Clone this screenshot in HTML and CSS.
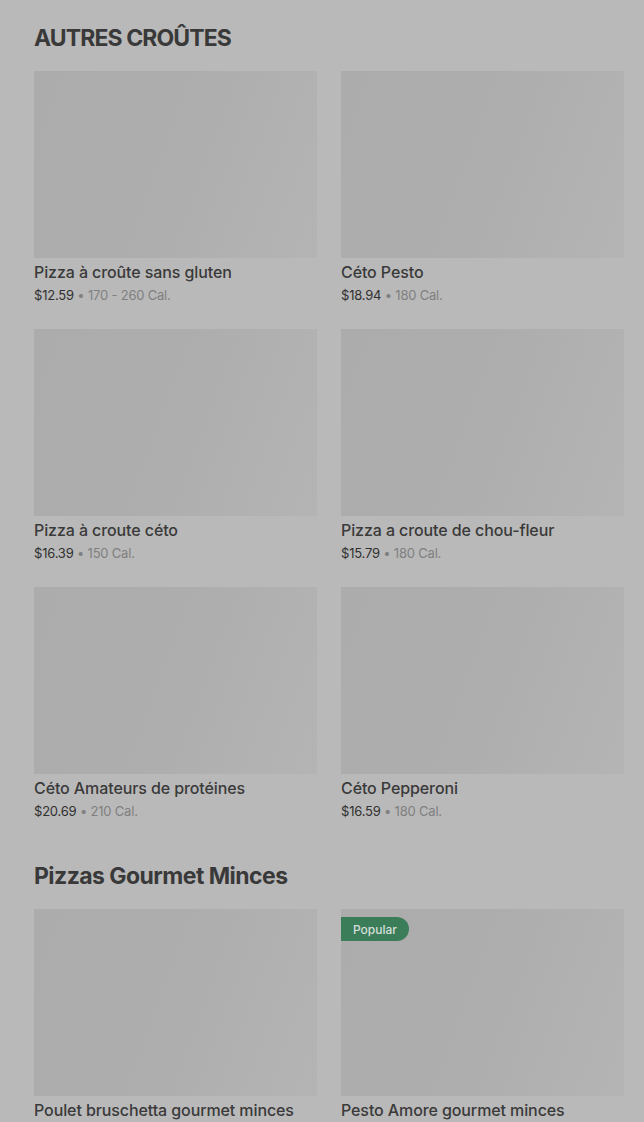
FILE: index.html
```html
<!DOCTYPE html>
<html lang="fr">
<head>
<meta charset="utf-8">
<link rel="stylesheet" href="styles.css">
</head>
<body>
<main class="page">
  <section class="section">
    <h2 class="heading heading-caps">AUTRES CROÛTES</h2>
    <div class="grid">
      <div class="card">
        <div class="thumb"></div>
        <div class="title">Pizza à croûte sans gluten</div>
        <div class="meta"><span class="price">$12.59</span> • 170 - 260 Cal.</div>
      </div>
      <div class="card">
        <div class="thumb"></div>
        <div class="title">Céto Pesto</div>
        <div class="meta"><span class="price">$18.94</span> • 180 Cal.</div>
      </div>
      <div class="card">
        <div class="thumb"></div>
        <div class="title">Pizza à croute céto</div>
        <div class="meta"><span class="price">$16.39</span> • 150 Cal.</div>
      </div>
      <div class="card">
        <div class="thumb"></div>
        <div class="title">Pizza a croute de chou-fleur</div>
        <div class="meta"><span class="price">$15.79</span> • 180 Cal.</div>
      </div>
      <div class="card">
        <div class="thumb"></div>
        <div class="title">Céto Amateurs de protéines</div>
        <div class="meta"><span class="price">$20.69</span> • 210 Cal.</div>
      </div>
      <div class="card">
        <div class="thumb"></div>
        <div class="title">Céto Pepperoni</div>
        <div class="meta"><span class="price">$16.59</span> • 180 Cal.</div>
      </div>
    </div>
  </section>
  <section class="section">
    <h2 class="heading heading-mixed">Pizzas Gourmet Minces</h2>
    <div class="grid">
      <div class="card">
        <div class="thumb"></div>
        <div class="title">Poulet bruschetta gourmet minces</div>
      </div>
      <div class="card">
        <div class="thumb"><span class="badge">Popular</span></div>
        <div class="title">Pesto Amore gourmet minces</div>
      </div>
    </div>
  </section>
</main>
</body>
</html>
```
FILE: styles.css
```css
html, body {
  margin: 0;
  padding: 0;
  background: #b9b9b9;
  height: 100%;
  overflow: hidden;
}
body {
  font-family: Inter, "Liberation Sans", sans-serif;
  color: #3b3b3b;
}
.page {
  padding: 22px 20px 0 34px;
}
.section {
  margin-bottom: 39px;
}
.heading {
  margin: 0 0 17px;
  font-size: 23px;
  line-height: 32px;
  font-weight: 700;
  color: #393939;
}
.heading-caps {
  letter-spacing: -0.9px;
}
.heading-mixed {
  letter-spacing: -0.55px;
}
.grid {
  display: grid;
  grid-template-columns: 283px 283px;
  column-gap: 24px;
  row-gap: 24px;
}
.thumb {
  position: relative;
  height: 187px;
  background: linear-gradient(110deg, #acacac 0%, #adadad 45%, #b1b1b1 75%, #b4b4b4 100%);
}
.title {
  margin-top: 2px;
  font-size: 16px;
  line-height: 24px;
  font-weight: 500;
  color: #3a3a3a;
  letter-spacing: -0.1px;
}
.meta {
  margin-top: 1px;
  font-size: 13px;
  line-height: 20px;
  color: #808080;
  letter-spacing: -0.2px;
}
.price {
  color: #303030;
}
.badge {
  position: absolute;
  left: 0;
  top: 8px;
  height: 24px;
  padding: 0 12px;
  display: flex;
  align-items: center;
  background: #3b7d59;
  color: #d6dfda;
  font-size: 12px;
  font-weight: 500;
  border-radius: 0 12px 12px 0;
}
```
